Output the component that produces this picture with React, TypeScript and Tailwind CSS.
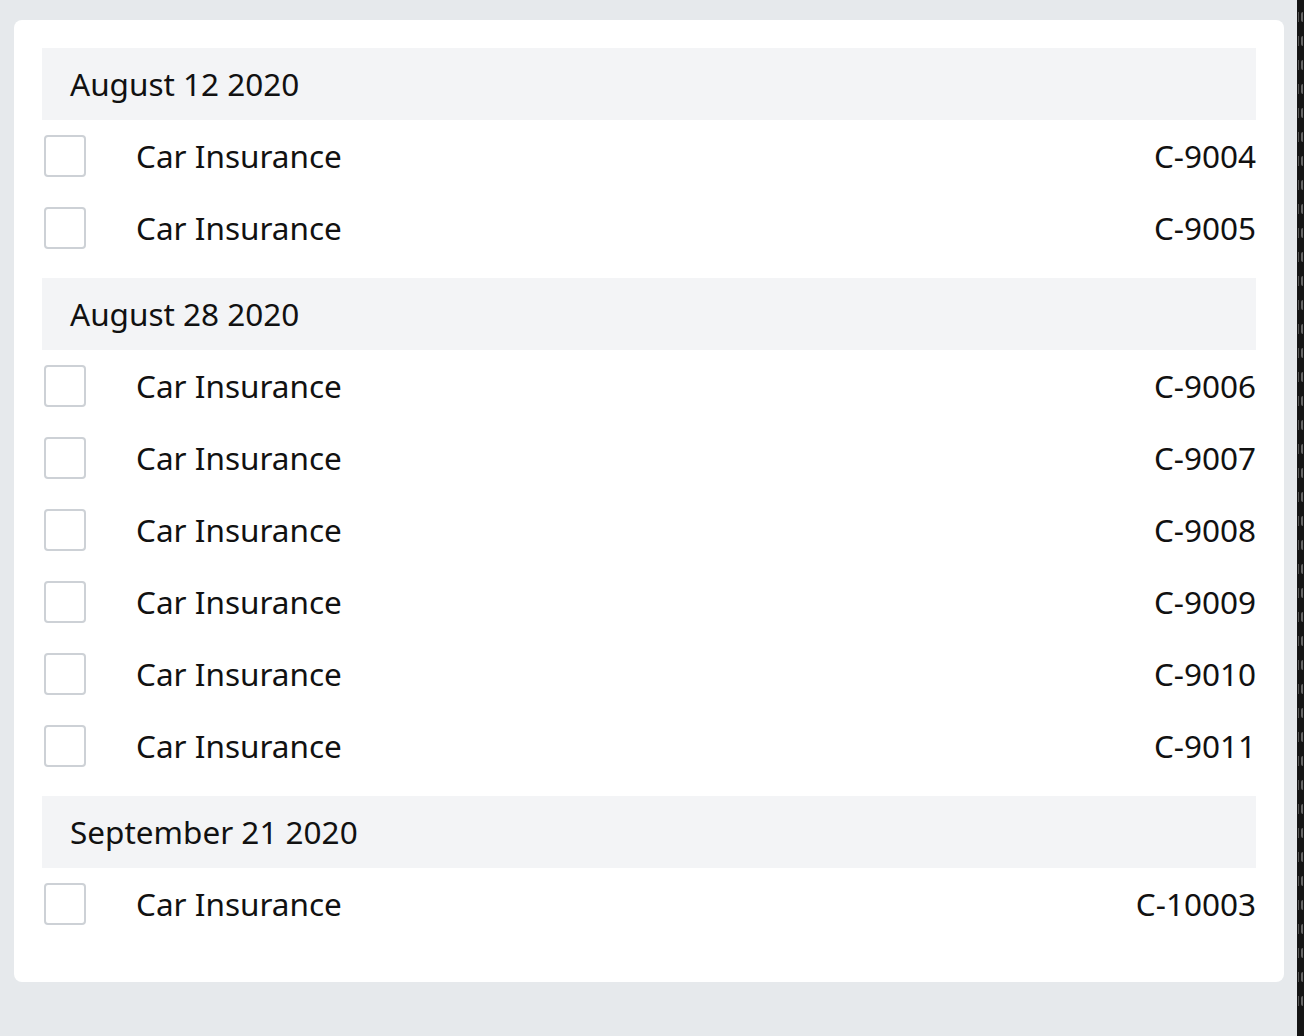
const GROUPS = [
  { date: 'August 12 2020', items: ['C-9004', 'C-9005'] },
  {
    date: 'August 28 2020',
    items: ['C-9006', 'C-9007', 'C-9008', 'C-9009', 'C-9010', 'C-9011'],
  },
  { date: 'September 21 2020', items: ['C-10003'] },
]

// faint glyph fragments of a cut-off panel at the right edge
const MARKS = Array.from({ length: 42 }, (_, i) => i)

export default function App() {
  return (
    <div
      className="flex h-[1036px] w-[1304px] overflow-hidden bg-[#e6e9ec] text-[#111]"
      style={{ fontFamily: '"Noto Sans", "Open Sans", sans-serif' }}
    >
      <div className="flex-1 pl-[14px] pr-[13px] pt-[20px]">
        <div className="rounded-[8px] bg-white px-[28px] pt-[28px] pb-[28px]">
          {GROUPS.map((group) => (
            <div key={group.date} className="mb-[14px]">
              <div className="flex h-[72px] items-center bg-[#f3f4f6] px-[28px] text-[31.5px]">
                {group.date}
              </div>
              {group.items.map((code) => (
                <div key={code} className="flex h-[72px] items-center text-[31.5px]">
                  <div className="ml-[2px] h-[42px] w-[42px] rounded-[4px] border-2 border-[#cdd1d6] bg-white" />
                  <span className="ml-[50px]">Car Insurance</span>
                  <span className="ml-auto">{code}</span>
                </div>
              ))}
            </div>
          ))}
        </div>
      </div>
      <div className="flex w-[7px] flex-col gap-[14px] overflow-hidden bg-[#151515] pt-[12px] pl-[1px]">
        {MARKS.map((i) => (
          <div key={i} className="flex h-[10px] shrink-0 gap-[2px]">
            <div className="h-full w-[1px] bg-[#555]" />
            <div className="h-full w-[2px] rounded-l-full border-l-2 border-[#666]" />
          </div>
        ))}
      </div>
    </div>
  )
}
